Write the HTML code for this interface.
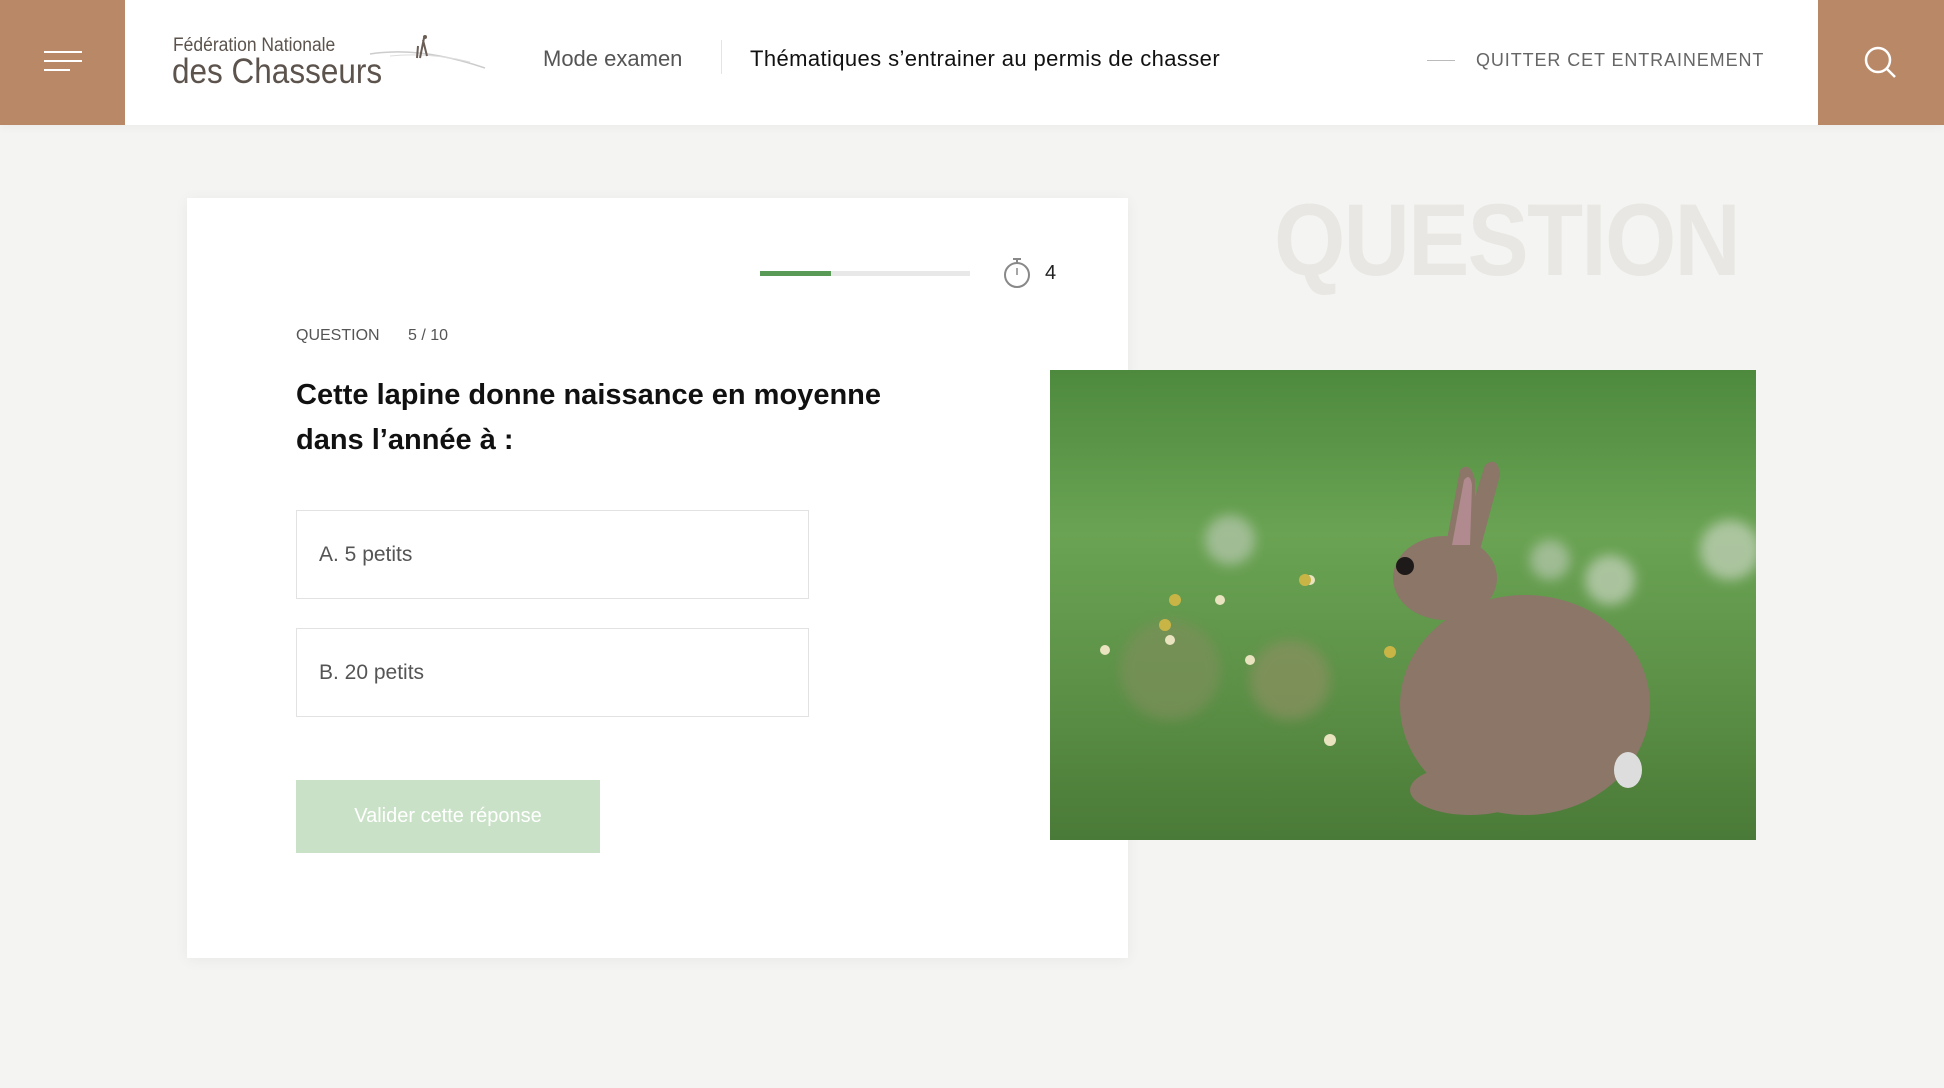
<!DOCTYPE html>
<html><head><meta charset="utf-8"><style>
*{margin:0;padding:0;box-sizing:border-box}
body{width:1944px;height:1088px;background:#f4f4f2;font-family:"Liberation Sans",sans-serif;position:relative;overflow:hidden}
.hdr{position:absolute;left:0;top:0;width:1944px;height:125px;background:#fff;box-shadow:0 2px 10px rgba(0,0,0,.04)}
.brown{position:absolute;top:0;height:125px;background:#b98867}
.abs{position:absolute;white-space:nowrap}
.card{position:absolute;left:187px;top:198px;width:941px;height:760px;background:#fff;box-shadow:0 2px 14px rgba(0,0,0,.05)}
.ans{position:absolute;left:296px;width:513px;height:89px;border:1px solid #e2e2e2;background:#fff;font-size:21px;color:#555;padding-left:22px;line-height:87px}
</style></head><body>
<div class="hdr"></div>
<div class="brown" style="left:0;width:125px">
 <div style="position:absolute;left:44px;top:51px;width:38px;height:2px;background:#fff"></div>
 <div style="position:absolute;left:44px;top:60px;width:38px;height:2px;background:#fff"></div>
 <div style="position:absolute;left:44px;top:69px;width:26px;height:2px;background:#fff"></div>
</div>
<div class="brown" style="left:1818px;width:126px">
 <svg style="position:absolute;left:44px;top:44px" width="38" height="38" viewBox="0 0 38 38"><circle cx="16" cy="16" r="12" fill="none" stroke="#fff" stroke-width="2.5"/><line x1="25" y1="25" x2="33" y2="33" stroke="#fff" stroke-width="2.5"/></svg>
</div>
<div class="abs" style="left:173px;top:35px;font-size:19px;color:#5c534d;transform:scaleX(.92);transform-origin:left">Fédération Nationale</div>
<div class="abs" style="left:172px;top:52px;font-size:35px;color:#5c534d;transform:scaleX(.9);transform-origin:left">des Chasseurs</div>
<svg class="abs" style="left:360px;top:32px" width="130" height="40" viewBox="0 0 130 40"><path d="M10 22 Q60 14 125 36" stroke="#ccc" fill="none" stroke-width="1.5"/><path d="M30 24 Q70 20 110 30" stroke="#ddd" fill="none"/><path d="M60 26 L64 6 M63 8 L67 24 M57 26 L58 14" stroke="#6a5d55" stroke-width="2" fill="none"/><circle cx="65" cy="5" r="2" fill="#6a5d55"/></svg>
<div class="abs" style="left:543px;top:46px;font-size:22px;color:#555">Mode examen</div>
<div class="abs" style="left:721px;top:40px;width:1px;height:34px;background:#e4e4e4"></div>
<div class="abs" style="left:750px;top:46px;font-size:22px;color:#111;letter-spacing:0.4px">Thématiques s’entrainer au permis de chasser</div>
<div class="abs" style="left:1427px;top:60px;width:28px;height:1px;background:#bbb"></div>
<div class="abs" style="left:1476px;top:50px;font-size:18px;color:#666;letter-spacing:.9px">QUITTER CET ENTRAINEMENT</div>

<div class="abs" style="left:1274px;top:182px;font-size:102px;font-weight:900;color:#e8e7e3;letter-spacing:-2px;transform:scaleX(.9);transform-origin:left">QUESTION</div>

<div class="card"></div>
<div class="abs" style="left:760px;top:271px;width:210px;height:5px;background:#e8e8e8"></div>
<div class="abs" style="left:760px;top:271px;width:71px;height:5px;background:#5a9a57"></div>
<svg class="abs" style="left:1002px;top:256px" width="30" height="34" viewBox="0 0 30 34"><circle cx="15" cy="19" r="12" fill="none" stroke="#888" stroke-width="2"/><line x1="11" y1="3" x2="19" y2="3" stroke="#888" stroke-width="2"/><line x1="15" y1="3" x2="15" y2="7" stroke="#888" stroke-width="2"/><line x1="15" y1="12" x2="15" y2="19" stroke="#888" stroke-width="1.5"/></svg>
<div class="abs" style="left:1045px;top:262px;font-size:20px;color:#222">4</div>
<div class="abs" style="left:296px;top:327px;font-size:16px;color:#555">QUESTION</div>
<div class="abs" style="left:408px;top:327px;font-size:16px;color:#555">5 / 10</div>
<div class="abs" style="left:296px;top:373px;font-size:29px;font-weight:bold;color:#111;line-height:45px">Cette lapine donne naissance en moyenne<br>dans l’année à :</div>
<div class="ans" style="top:510px">A. 5 petits</div>
<div class="ans" style="top:628px">B. 20 petits</div>
<div class="abs" style="left:296px;top:780px;width:304px;height:73px;background:#c9e1c6;color:#fff;font-size:20px;text-align:center;line-height:73px">Valider cette réponse</div>

<svg class="abs" style="left:1050px;top:370px" width="706" height="470" viewBox="0 0 706 470">
<defs><linearGradient id="g" x1="0" y1="0" x2="0" y2="1"><stop offset="0" stop-color="#4e8a3e"/><stop offset=".35" stop-color="#6aa353"/><stop offset=".7" stop-color="#5b8f46"/><stop offset="1" stop-color="#4a7a37"/></linearGradient>
<filter id="b"><feGaussianBlur stdDeviation="6"/></filter></defs>
<rect width="706" height="470" fill="url(#g)"/>
<g filter="url(#b)" opacity=".7"><circle cx="180" cy="170" r="25" fill="#b8c8b0"/><circle cx="500" cy="190" r="20" fill="#b8c8b0"/><circle cx="560" cy="210" r="25" fill="#c8d4c0"/><circle cx="680" cy="180" r="30" fill="#c8d4c0"/><circle cx="120" cy="300" r="50" fill="#7d8f5a"/><circle cx="240" cy="310" r="40" fill="#8a9060"/></g>
<g fill="#e9e3c0"><circle cx="170" cy="230" r="5"/><circle cx="120" cy="270" r="5"/><circle cx="260" cy="210" r="5"/><circle cx="280" cy="370" r="6"/><circle cx="55" cy="280" r="5"/><circle cx="200" cy="290" r="5"/></g>
<g fill="#c9b546"><circle cx="255" cy="210" r="6"/><circle cx="125" cy="230" r="6"/><circle cx="115" cy="255" r="6"/><circle cx="340" cy="282" r="6"/></g>
<g fill="#8c7668">
<ellipse cx="475" cy="335" rx="125" ry="110"/>
<ellipse cx="395" cy="208" rx="52" ry="42"/>
<path d="M395 180 L410 100 Q420 90 425 110 L425 185 Z"/>
<path d="M410 175 L435 95 Q448 85 450 105 L430 180 Z"/>
<ellipse cx="420" cy="420" rx="60" ry="25"/>
</g>
<path d="M402 175 L414 110 Q420 102 422 115 L420 175 Z" fill="#b08a8e"/>
<circle cx="355" cy="196" r="9" fill="#1e1a1a"/>
<ellipse cx="578" cy="400" rx="14" ry="18" fill="#ddd"/>
</svg>
</body></html>
